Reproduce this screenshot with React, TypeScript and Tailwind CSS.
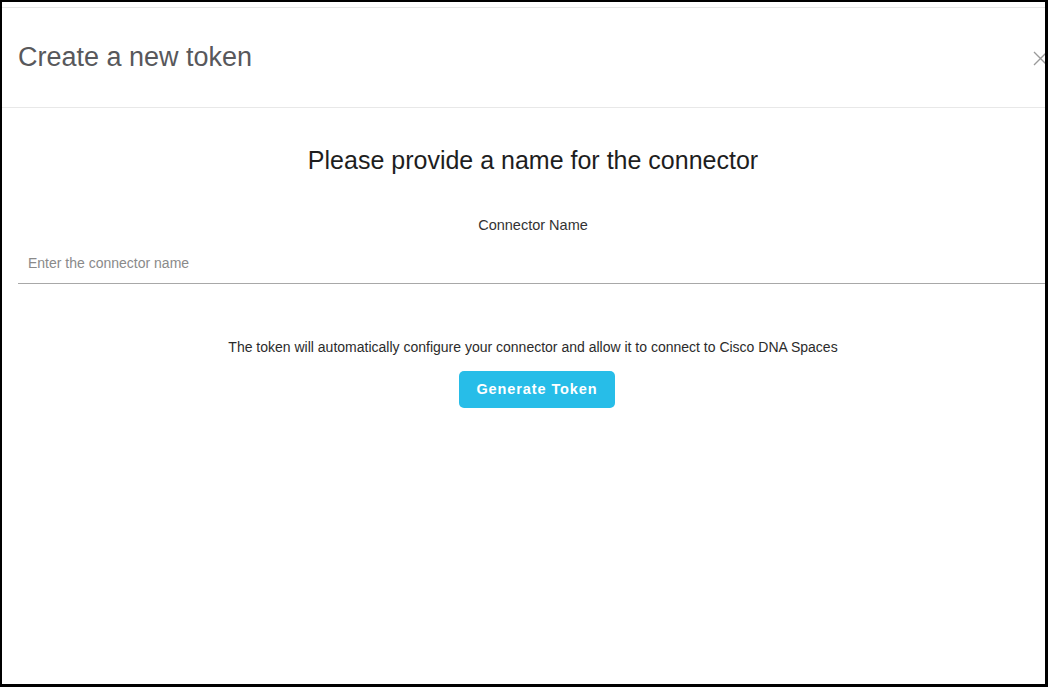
const CloseIcon = () => (
  <svg width="15" height="15" viewBox="0 0 15 15" fill="none" stroke="#9a9a9a" strokeWidth="1.3">
    <path d="M1 1 L14 14 M14 1 L1 14" />
  </svg>
);

const App = () => {
  return (
    <div className="w-[1048px] h-[687px] bg-black pt-[2px] pl-[2px] pr-[3px] pb-[3px] font-['Liberation_Sans',Arial,sans-serif]">
      <div className="h-full bg-white overflow-hidden pt-[5px]">
        <div className="w-[1062px] border-t border-[#e6e6e6]">
          {/* header */}
          <div className="h-[100px] flex items-center justify-between pl-[16px] pr-[16px] border-b border-[#e8e8e8]">
            <h1 className="text-[27px] text-[#58585b] leading-none">Create a new token</h1>
            <button className="mt-[2px]">
              <CloseIcon />
            </button>
          </div>

          {/* body */}
          <div className="pt-[37px] px-[16px]">
            <h2 className="text-center text-[25px] leading-[30px] text-[#1e1e1e] font-light">
              Please provide a name for the connector
            </h2>
            <div className="mt-[40px] text-center text-[14.5px] leading-[20px] text-[#333] font-medium">
              Connector Name
            </div>
            <div className="mt-[8px] border-b border-[#a8a8a8]">
              <input
                className="w-full h-[40px] px-[10px] text-[14px] text-[#333] placeholder:text-[#8a8a8a] outline-none"
                placeholder="Enter the connector name"
              />
            </div>
            <p className="mt-[53px] text-center text-[14px] leading-[20px] text-[#2b2b2b]">
              The token will automatically configure your connector and allow it to connect to Cisco DNA Spaces
            </p>
            <div className="mt-[14px] flex justify-center">
              <button className="ml-[8px] w-[156px] h-[37px] rounded-[5px] bg-[#27bde8] text-white text-[14.5px] font-bold tracking-[0.9px]">
                Generate Token
              </button>
            </div>
          </div>
        </div>
      </div>
    </div>
  );
};

export default App;
